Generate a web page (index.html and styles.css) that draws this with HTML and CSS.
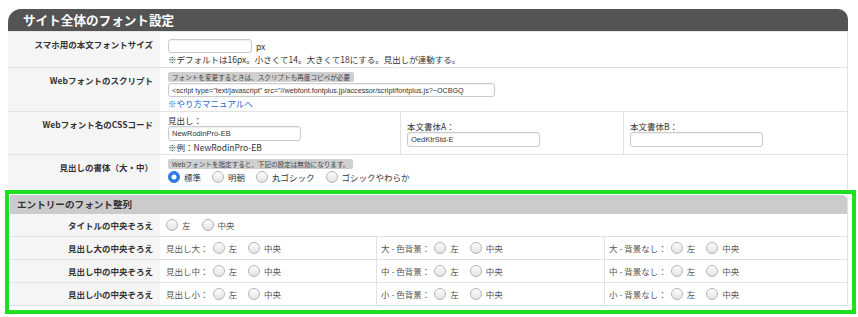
FILE: index.html
```html
<!DOCTYPE html>
<html lang="ja">
<head>
    <meta charset="UTF-8">
    <meta name="viewport" content="width=device-width, initial-scale=1.0">
    <title>フォント設定</title>
    <link rel="stylesheet" href="styles.css">
</head>
<body>
    <div class="panel">
        <h2 class="panel-title">サイト全体のフォント設定</h2>
        <div class="panel-body">
            <div class="row">
                <div class="row-label">スマホ用の本文フォントサイズ</div>
                <div class="row-value row-size">
                    <div class="line">
                        <input class="field field-size" type="text">
                        <span>px</span>
                    </div>
                    <p class="note">※デフォルトは16px。小さくて14。大きくて18にする。見出しが連動する。</p>
                </div>
            </div>
            <div class="row">
                <div class="row-label">Webフォントのスクリプト</div>
                <div class="row-value row-script">
                    <span class="hint">フォントを変更するときは、スクリプトも再度コピペが必要</span>
                    <input class="field field-script" type="text" value='<script type="text/javascript" src="//webfont.fontplus.jp/accessor/script/fontplus.js?~OCBGQ'>
                    <a class="manual-link" href="#">※やり方マニュアルへ</a>
                </div>
            </div>
            <div class="row">
                <div class="row-label">Webフォント名のCSSコード</div>
                <div class="row-split">
                    <div class="split-cell">
                        <p class="note">見出し：</p>
                        <input class="field field-name" type="text" value="NewRodinPro-EB">
                        <p class="note">※例：NewRodinPro-EB</p>
                    </div>
                    <div class="split-cell">
                        <p class="note">本文書体A：</p>
                        <input class="field field-name" type="text" value="OedKtrStd-E">
                    </div>
                    <div class="split-cell">
                        <p class="note">本文書体B：</p>
                        <input class="field field-name" type="text">
                    </div>
                </div>
            </div>
            <div class="row row-last">
                <div class="row-label">見出しの書体（大・中）</div>
                <div class="row-value row-face">
                    <span class="hint">Webフォントを指定すると、下記の設定は無効になります。</span>
                    <div class="choices">
                        <label class="option"><input class="radio" type="radio" name="face" checked>標準</label>
                        <label class="option"><input class="radio" type="radio" name="face">明朝</label>
                        <label class="option"><input class="radio" type="radio" name="face">丸ゴシック</label>
                        <label class="option"><input class="radio" type="radio" name="face">ゴシックやわらか</label>
                    </div>
                </div>
            </div>
        </div>
    </div>

    <div class="highlight">
        <div class="sub-panel">
            <h3 class="sub-title">エントリーのフォント整列</h3>
            <div class="sub-row">
                <div class="row-label">タイトルの中央ぞろえ</div>
                <div class="sub-value">
                    <div class="choices">
                        <label class="option"><input class="radio" type="radio" name="title">左</label>
                        <label class="option"><input class="radio" type="radio" name="title">中央</label>
                    </div>
                </div>
            </div>
            <div class="sub-row">
                <div class="row-label">見出し大の中央ぞろえ</div>
                <div class="sub-split">
                    <div class="choices">
                        <span class="prefix">見出し大：</span>
                        <label class="option"><input class="radio" type="radio" name="h2a">左</label>
                        <label class="option"><input class="radio" type="radio" name="h2a">中央</label>
                    </div>
                    <div class="choices">
                        <span class="prefix">大 - 色背景：</span>
                        <label class="option"><input class="radio" type="radio" name="h2b">左</label>
                        <label class="option"><input class="radio" type="radio" name="h2b">中央</label>
                    </div>
                    <div class="choices">
                        <span class="prefix">大 - 背景なし：</span>
                        <label class="option"><input class="radio" type="radio" name="h2c">左</label>
                        <label class="option"><input class="radio" type="radio" name="h2c">中央</label>
                    </div>
                </div>
            </div>
            <div class="sub-row">
                <div class="row-label">見出し中の中央ぞろえ</div>
                <div class="sub-split">
                    <div class="choices">
                        <span class="prefix">見出し中：</span>
                        <label class="option"><input class="radio" type="radio" name="h3a">左</label>
                        <label class="option"><input class="radio" type="radio" name="h3a">中央</label>
                    </div>
                    <div class="choices">
                        <span class="prefix">中 - 色背景：</span>
                        <label class="option"><input class="radio" type="radio" name="h3b">左</label>
                        <label class="option"><input class="radio" type="radio" name="h3b">中央</label>
                    </div>
                    <div class="choices">
                        <span class="prefix">中 - 背景なし：</span>
                        <label class="option"><input class="radio" type="radio" name="h3c">左</label>
                        <label class="option"><input class="radio" type="radio" name="h3c">中央</label>
                    </div>
                </div>
            </div>
            <div class="sub-row">
                <div class="row-label">見出し小の中央ぞろえ</div>
                <div class="sub-split">
                    <div class="choices">
                        <span class="prefix">見出し小：</span>
                        <label class="option"><input class="radio" type="radio" name="h4a">左</label>
                        <label class="option"><input class="radio" type="radio" name="h4a">中央</label>
                    </div>
                    <div class="choices">
                        <span class="prefix">小 - 色背景：</span>
                        <label class="option"><input class="radio" type="radio" name="h4b">左</label>
                        <label class="option"><input class="radio" type="radio" name="h4b">中央</label>
                    </div>
                    <div class="choices">
                        <span class="prefix">小 - 背景なし：</span>
                        <label class="option"><input class="radio" type="radio" name="h4c">左</label>
                        <label class="option"><input class="radio" type="radio" name="h4c">中央</label>
                    </div>
                </div>
            </div>
        </div>
    </div>
</body>
</html>
```

FILE: styles.css
```css
* {
    box-sizing: border-box;
}
body {
    margin: 0;
    font-family: "Noto Sans CJK JP", sans-serif;
    font-size: 8.5px;
    line-height: 12px;
    color: #333;
    background: #fff;
}
p {
    margin: 0;
}
.panel {
    margin: 9px 10px 0 8px;
}
.panel-title {
    margin: 0;
    height: 22px;
    padding-left: 15px;
    background: #545454;
    color: #fff;
    font-size: 12.6px;
    font-weight: bold;
    line-height: 22px;
    border-radius: 13px 10px 0 0;
}
.panel-body {
    border-top: 1px solid #e6e6e6;
    border-right: 1px solid #e2e2e2;
}
.row {
    display: grid;
    grid-template-columns: 152px 1fr;
    column-gap: 2px;
    border-bottom: 1px solid #e2e2e2;
}
.row-last {
    border-bottom: none;
}
.row-label {
    background: #f5f5f5;
    font-weight: bold;
    text-align: right;
    padding: 6px 7px 0 0;
}
.row-value {
    padding: 0 6px;
}
.row-size {
    padding-top: 7px;
    padding-bottom: 2px;
}
.row-script {
    padding-top: 4px;
    padding-bottom: 2px;
    display: flex;
    flex-direction: column;
    align-items: flex-start;
}
.row-face {
    height: 35px;
    padding-top: 4px;
    display: flex;
    flex-direction: column;
    align-items: flex-start;
    gap: 2px;
}
.line {
    display: flex;
    align-items: center;
    gap: 4px;
    height: 14px;
}
.field {
    height: 14px;
    border: 1px solid #cacaca;
    border-radius: 3px;
    background: #fff;
    box-shadow: inset 0 1px 1px rgba(0, 0, 0, 0.06);
    font-family: "Liberation Sans", Arial, sans-serif;
    font-size: 7.5px;
    color: #333;
    padding: 0 3px;
    margin: 0;
    outline: none;
}
.field-size {
    width: 84px;
}
.field-script {
    width: 327px;
    margin-top: 1px;
    font-size: 7.2px;
}
.field-name {
    width: 133px;
    height: 15px;
}
.hint {
    display: inline-block;
    background: #cfcfcf;
    color: #444;
    font-size: 6.6px;
    line-height: 10px;
    padding: 0 4px;
    border-radius: 2px;
}
.manual-link {
    color: #2466d2;
    text-decoration: none;
}
.row-split {
    display: grid;
    grid-template-columns: 238px 223px 1fr;
    height: 42px;
}
.split-cell {
    display: flex;
    flex-direction: column;
    justify-content: center;
    align-items: flex-start;
    padding-left: 6px;
}
.split-cell + .split-cell {
    border-left: 1px solid #e2e2e2;
}
.choices {
    display: flex;
    align-items: center;
    height: 12px;
}
.option {
    display: flex;
    align-items: center;
    gap: 4px;
}
.option + .option {
    margin-left: 11px;
}
.prefix {
    margin-right: 4px;
}
.radio {
    appearance: none;
    -webkit-appearance: none;
    width: 12px;
    height: 12px;
    margin: 0;
    border: 1px solid #b4b4b4;
    border-radius: 50%;
    background: linear-gradient(#fdfdfd, #e4e4e4);
}
.radio:checked {
    border-color: #2b6fd8;
    background: radial-gradient(circle, #fff 0 2.2px, #2f7de9 2.8px);
}
.highlight {
    margin: 0 2px 0 5px;
    border: 4px solid #1ee01e;
    padding: 1px 4px 4px 1px;
}
.sub-panel {
    border-right: 1px solid #e2e2e2;
}
.sub-title {
    margin: 0;
    height: 19px;
    padding-left: 7px;
    background: #cbcbcb;
    color: #333;
    font-size: 9.6px;
    font-weight: bold;
    line-height: 19px;
    border-radius: 0 5px 0 0;
}
.sub-row {
    display: grid;
    grid-template-columns: 150px 1fr;
    column-gap: 2px;
    height: 23px;
    border-bottom: 1px solid #e2e2e2;
}
.sub-row .row-label {
    padding: 0 7px 0 0;
    line-height: 22px;
}
.sub-value {
    display: flex;
    align-items: center;
    padding-left: 4px;
    color: #555;
}
.sub-split {
    display: grid;
    grid-template-columns: 214px 228px 1fr;
    color: #555;
}
.sub-split .choices {
    height: 22px;
    padding-left: 4px;
}
.sub-split .choices + .choices {
    border-left: 1px solid #e2e2e2;
}
```
